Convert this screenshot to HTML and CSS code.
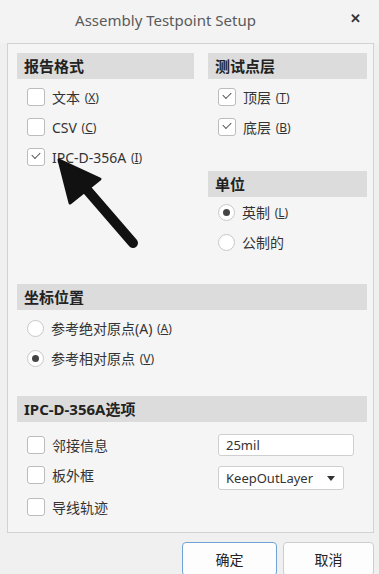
FILE: index.html
```html
<!DOCTYPE html>
<html>
<head>
    <title>Assembly Testpoint Setup</title>
    <link rel="stylesheet" href="styles.css">
</head>
<body>
    <div class="dialog">
        <div class="titlebar">
            <span class="title">Assembly Testpoint Setup</span>
            <span class="close">&#x2715;</span>
        </div>

        <div class="panel">
            <div class="top-grid">
                <!-- report format -->
                <div class="group">
                    <div class="group-head">报告格式</div>
                    <div class="rows">
                        <label class="row"><span class="box"></span>文本 <span class="key">(<u>X</u>)</span></label>
                        <label class="row"><span class="box"></span>CSV <span class="key">(<u>C</u>)</span></label>
                        <label class="row"><span class="box checked"></span>IPC-D-356A <span class="key">(<u>I</u>)</span></label>
                    </div>
                </div>

                <div class="group">
                    <div class="group-head">测试点层</div>
                    <div class="rows">
                        <label class="row"><span class="box checked"></span>顶层 <span class="key">(<u>T</u>)</span></label>
                        <label class="row"><span class="box checked"></span>底层 <span class="key">(<u>B</u>)</span></label>
                    </div>

                    <div class="group-head unit-head">单位</div>
                    <div class="rows tight">
                        <label class="row"><span class="radio on"></span>英制 <span class="key">(<u>L</u>)</span></label>
                        <label class="row"><span class="radio"></span>公制的</label>
                    </div>
                </div>
            </div>

            <div class="group-head coord-head">坐标位置</div>
            <div class="rows">
                <label class="row"><span class="radio"></span>参考绝对原点(A) <span class="key">(<u>A</u>)</span></label>
                <label class="row"><span class="radio on"></span>参考相对原点 <span class="key">(<u>V</u>)</span></label>
            </div>

            <div class="group-head ipc-head">IPC-D-356A选项</div>
            <div class="ipc-grid">
                <label class="row"><span class="box"></span>邻接信息</label>
                <div class="field"><input class="text-input" type="text" value="25mil"></div>
                <label class="row"><span class="box"></span>板外框</label>
                <div class="field">
                    <div class="select">KeepOutLayer<span class="caret"></span></div>
                </div>
                <label class="row"><span class="box"></span>导线轨迹</label>
                <div></div>
            </div>
        </div>

        <div class="buttons">
            <button class="btn primary">确定</button>
            <button class="btn">取消</button>
        </div>

        <!-- annotation arrow drawn over the dialog -->
        <svg class="arrow" width="379" height="574" viewBox="0 0 379 574">
            <line x1="133" y1="243" x2="82" y2="184" stroke="#111" stroke-width="10" stroke-linecap="round"/>
            <polygon points="59,160 100,179 70,203" fill="#111" stroke="#111" stroke-width="3" stroke-linejoin="round"/>
        </svg>
    </div>
</body>
</html>
```

FILE: styles.css
```css
body {
    margin: 0;
    padding: 0;
    background-color: #f0f0f0;
    font-family: "Noto Sans", "Noto Sans CJK SC", sans-serif;
    color: #333;
}

.dialog {
    position: relative;
    width: 379px;
    height: 574px;
    overflow: hidden;
}

.titlebar {
    height: 43px;
    display: flex;
    align-items: center;
    justify-content: center;
    padding-right: 50px;
    padding-left: 2px;
    box-sizing: border-box;
    background-color: #f3f3f3;
}

.title {
    font-size: 15px;
    color: #5a5a5a;
    margin-top: -4px;
}

.close {
    position: absolute;
    right: 18px;
    top: 9px;
    font-size: 13px;
    font-weight: bold;
    color: #333;
}

.panel {
    margin-left: 7px;
    width: 367px;
    box-sizing: border-box;
    border: 1px solid #d2d2d2;
    background-color: #f5f5f5;
    padding: 9px 6px 12px 9px;
}

.top-grid {
    display: grid;
    grid-template-columns: 177px 159px;
    column-gap: 14px;
}

.group-head {
    height: 26px;
    line-height: 26px;
    background-color: #dcdcdc;
    padding-left: 7px;
    font-family: "Noto Sans CJK SC", sans-serif;
    font-weight: bold;
    font-size: 15px;
    color: #222;
}

.unit-head {
    margin-top: 29px;
}

.coord-head {
    margin-top: 27px;
}

.ipc-head {
    margin-top: 23px;
    font-family: "Noto Sans", "Noto Sans CJK SC", sans-serif;
}

.rows {
    padding-top: 3px;
}

.rows.tight {
    padding-top: 0;
}

.row {
    display: flex;
    align-items: center;
    height: 30px;
    padding-left: 10px;
    font-size: 14px;
    color: #333;
    white-space: pre;
}

.key {
    font-size: 12px;
    margin-left: 1px;
}

.box {
    width: 16px;
    height: 16px;
    border: 1px solid #bcbcbc;
    border-radius: 3px;
    background-color: #fff;
    margin-right: 7px;
    position: relative;
    flex-shrink: 0;
}

.box.checked::after {
    content: "";
    position: absolute;
    left: 4px;
    top: 3px;
    width: 7px;
    height: 4px;
    border-left: 1.5px solid #555;
    border-bottom: 1.5px solid #555;
    transform: rotate(-45deg);
}

.radio {
    width: 15px;
    height: 15px;
    border: 1px solid #c8c8c8;
    border-radius: 50%;
    background-color: #fff;
    margin-right: 7px;
    position: relative;
    flex-shrink: 0;
}

.radio.on::after {
    content: "";
    position: absolute;
    left: 4px;
    top: 4px;
    width: 7px;
    height: 7px;
    border-radius: 50%;
    background-color: #444;
}

.ipc-grid {
    display: grid;
    grid-template-columns: 177px 159px;
    grid-template-rows: 30px 32px 28px;
    column-gap: 14px;
    padding-top: 8px;
}

.field {
    display: flex;
    align-items: center;
    padding-left: 10px;
}

.text-input {
    width: 136px;
    height: 22px;
    box-sizing: border-box;
    border: 1px solid #cfcfcf;
    border-radius: 3px;
    background-color: #fff;
    padding: 0 7px;
    font-family: "Noto Sans", sans-serif;
    font-size: 13px;
    color: #333;
}

.select {
    position: relative;
    width: 126px;
    height: 24px;
    line-height: 22px;
    box-sizing: border-box;
    border: 1px solid #cfcfcf;
    border-radius: 3px;
    background-color: #fff;
    padding-left: 7px;
    font-size: 13px;
    color: #333;
    margin-top: 3px;
}

.caret {
    position: absolute;
    right: 8px;
    top: 9px;
    width: 0;
    height: 0;
    border-left: 4px solid transparent;
    border-right: 4px solid transparent;
    border-top: 5px solid #333;
}

.buttons {
    display: flex;
    justify-content: flex-end;
    gap: 6px;
    padding-right: 5px;
    margin-top: 9px;
}

.btn {
    height: 34px;
    width: 91px;
    border: 1px solid #cdcdcd;
    border-radius: 4px;
    background-color: #fdfdfd;
    font-family: "Noto Sans CJK SC", sans-serif;
    font-size: 14px;
    color: #222;
}

.btn.primary {
    width: 95px;
    border-color: #6fa3d8;
}

.arrow {
    position: absolute;
    left: 0;
    top: 0;
    pointer-events: none;
}
```
